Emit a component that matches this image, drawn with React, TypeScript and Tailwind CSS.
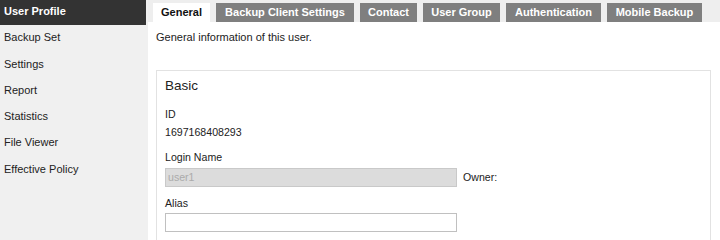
const menu = ["User Profile", "Backup Set", "Settings", "Report", "Statistics", "File Viewer", "Effective Policy"]

const tabs = [
  { label: "General", w: "w-[57px]" },
  { label: "Backup Client Settings", w: "w-[138px]" },
  { label: "Contact", w: "w-[57px]" },
  { label: "User Group", w: "w-[77px]" },
  { label: "Authentication", w: "w-[95px]" },
  { label: "Mobile Backup", w: "w-[95px]" },
]

export default function App() {
  return (
    <div className="flex w-[720px] h-[240px] overflow-hidden bg-white text-[#333] font-['Liberation_Sans',Arial,sans-serif]">
      {/* sidebar */}
      <div className="w-[148px] shrink-0 h-full bg-[#f0f0f0]">
        {menu.map((item, i) => (
          <div
            key={item}
            className={
              i === 0
                ? "w-[146px] h-[25px] mb-[1.3px] pl-[4px] pt-[5px] text-[11px] leading-[13px] font-bold bg-[#333] text-white"
                : "w-[146px] h-[25px] mb-[1.3px] pl-[4px] pt-[5px] text-[11px] leading-[13px] text-[#222]"
            }
          >
            {item}
          </div>
        ))}
      </div>

      {/* main */}
      <div className="flex-1 flex flex-col">
        <div className="h-[22px] shrink-0 bg-[#eeeeee] pl-[5px] pt-[3px] flex gap-[6px]">
          {tabs.map((t, i) => (
            <div
              key={t.label}
              className={
                i === 0
                  ? `${t.w} h-[19px] flex items-center justify-center text-[11px] font-bold bg-white text-[#111]`
                  : `${t.w} h-[19px] flex items-center justify-center text-[11px] font-bold bg-[#7f7f7f] text-white`
              }
            >
              {t.label}
            </div>
          ))}
        </div>

        <div className="pl-[8px] pr-[9px]">
          <p className="mt-[8.5px] text-[11px] leading-[13px] text-[#222]">General information of this user.</p>

          <div className="mt-[26.5px] border border-[#e2e2e2] h-[200px] pl-[8px]">
            <div className="mt-[7px] h-[16px] text-[13.5px] leading-[16px] text-[#222]">Basic</div>

            <div className="mt-[14px] h-[13px] text-[10.6px] leading-[13px] text-[#222]">ID</div>
            <div className="mt-[5px] h-[13px] text-[10.6px] leading-[13px] text-[#222]">1697168408293</div>

            <div className="mt-[12px] h-[13px] text-[10.6px] leading-[13px] text-[#222]">Login Name</div>
            <div className="mt-[4px] flex items-center">
              <div className="w-[292px] h-[19px] bg-[#dcdcdc] border border-[#c9c9c9] pl-[2px] text-[10.6px] leading-[17px] text-[#ababab]">
                user1
              </div>
              <span className="ml-[6px] text-[10.6px] leading-[13px] text-[#222]">Owner:</span>
            </div>

            <div className="mt-[10px] h-[13px] text-[10.6px] leading-[13px] text-[#222]">Alias</div>
            <div className="mt-[3px] w-[292px] h-[19px] bg-white border border-[#c0c0c0]" />
          </div>
        </div>
      </div>
    </div>
  )
}
